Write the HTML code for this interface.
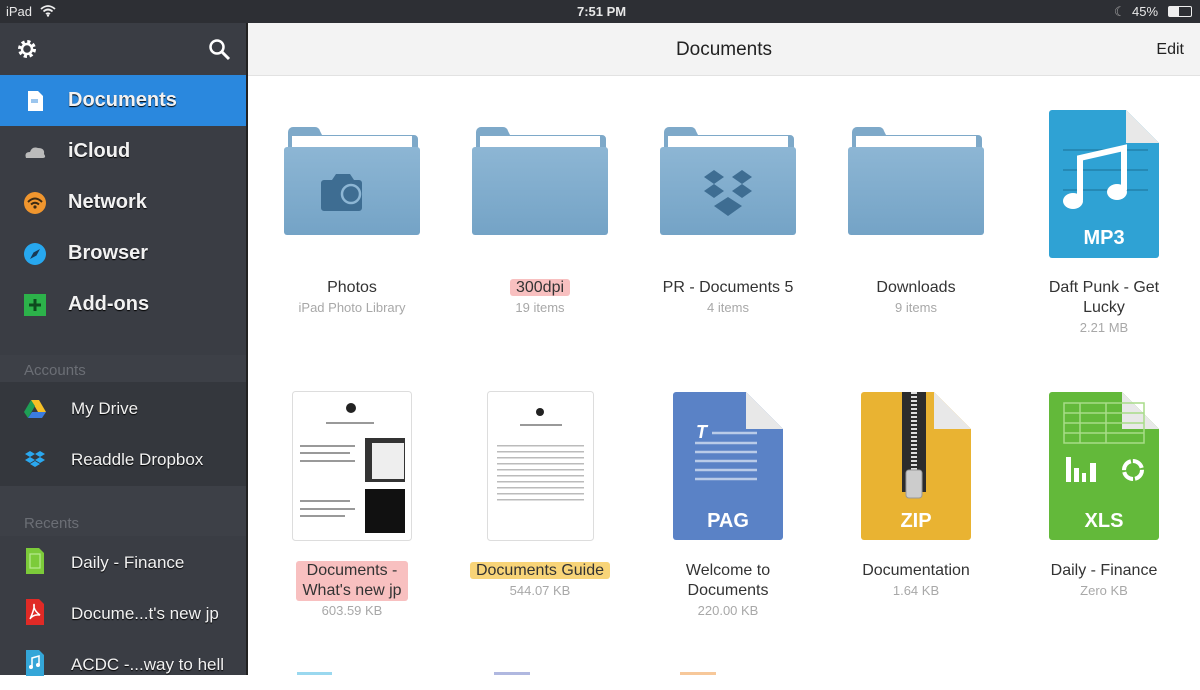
<!DOCTYPE html>
<html><head><meta charset="utf-8"><style>
*{margin:0;padding:0;box-sizing:border-box}
body{width:1200px;height:675px;overflow:hidden;background:#fff;font-family:"Liberation Sans","Noto Sans CJK JP",sans-serif;position:relative}
.abs{position:absolute}
#status{left:0;top:0;width:1200px;height:23px;background:#2d2f34;color:#e8e8e8;font-size:13px}
#side{left:0;top:23px;width:246px;height:652px;background:#3a3d44}
.row{position:absolute;left:0;width:246px;height:51px;color:#f2f2f2;font-size:20px;font-weight:bold;text-shadow:0 1px 1px #000}
.row span{position:absolute;left:68px;top:14px}
.row.sm{font-size:17px;font-weight:normal}
.row.sm span{left:71px;top:16px}
.ic{position:absolute;left:23px;top:14px;width:24px;height:24px}
.sec{position:absolute;left:24px;color:#6b6e75;font-size:15px}
#hdr{left:248px;top:23px;width:952px;height:53px;background:#f3f3f3;border-bottom:1px solid #e2e2e2}
.cell{position:absolute;width:188px;text-align:center}
.name{font-size:16px;color:#333;line-height:20px}
.sub{font-size:13px;color:#a8a8a8;line-height:20px}
.hl{padding:0 6px;border-radius:3px}
</style></head><body>
<div id="status" class="abs">
 <span class="abs" style="left:6px;top:4px">iPad</span>
 <svg class="abs" style="left:40px;top:5px" width="16" height="12" viewBox="0 0 16 12"><path d="M1 4 Q8 -2 15 4 M3.5 6.5 Q8 2.5 12.5 6.5 M6 9 Q8 7.5 10 9" stroke="#eee" stroke-width="1.8" fill="none"/><circle cx="8" cy="10.5" r="1.2" fill="#eee"/></svg>
 <span class="abs" style="left:577px;top:4px;font-weight:bold">7:51 PM</span>
 <span class="abs" style="left:1114px;top:4px;color:#aaa">☾</span>
 <span class="abs" style="left:1132px;top:4px">45%</span>
 <div class="abs" style="left:1168px;top:6px;width:24px;height:11px;border:1px solid #eee;border-radius:2px"><div style="width:10px;height:9px;background:#eee"></div></div>
</div>
<div id="side" class="abs">
 <svg class="abs" style="left:15px;top:14px" width="24" height="24" viewBox="0 0 24 24"><circle cx="12" cy="12" r="7" fill="none" stroke="#fff" stroke-width="4" stroke-dasharray="3 2.5"/><circle cx="12" cy="12" r="5" fill="none" stroke="#fff" stroke-width="2.5"/></svg>
 <svg class="abs" style="left:208px;top:15px" width="24" height="24" viewBox="0 0 24 24"><circle cx="9" cy="9" r="6.5" fill="none" stroke="#fff" stroke-width="2.5"/><path d="M14 14 L21 21" stroke="#fff" stroke-width="3"/></svg>
 <div class="row" style="top:52px;background:#2a88de;height:51px"><svg class="ic" viewBox="0 0 24 24"><path d="M5 2h10l5 5v15H5z" fill="#fff"/><rect x="8" y="10" width="7" height="4" fill="#9cc6ee"/></svg><span>Documents</span></div>
 <div class="row" style="top:103px"><svg class="ic" viewBox="0 0 24 24"><path d="M3 18 Q1 12 7 12 Q9 6 15 8 Q22 8 21 14 Q24 18 19 18Z" fill="#bbb"/></svg><span>iCloud</span></div>
 <div class="row" style="top:154px"><svg class="ic" viewBox="0 0 24 24"><circle cx="12" cy="12" r="11" fill="#f0962e"/><path d="M5 11 Q12 4 19 11 M8 13.5 Q12 10 16 13.5" stroke="#3a2a14" stroke-width="2" fill="none"/><circle cx="12" cy="16" r="1.6" fill="#3a2a14"/></svg><span>Network</span></div>
 <div class="row" style="top:205px"><svg class="ic" viewBox="0 0 24 24"><circle cx="12" cy="12" r="11" fill="#27a8ef"/><path d="M17 7 L13.5 13.5 L7 17 L10.5 10.5Z" fill="#183a55"/></svg><span>Browser</span></div>
 <div class="row" style="top:256px"><svg class="ic" viewBox="0 0 24 24"><rect x="1" y="1" width="22" height="22" fill="#2cb24a"/><path d="M12 6v12M6 12h12" stroke="#0e4a1e" stroke-width="3"/></svg><span>Add-ons</span></div>
 <div class="abs" style="left:0;top:332px;width:246px;height:27px;background:#3d4047"></div>
 <div class="sec" style="top:339px">Accounts</div>
 <div class="abs" style="left:0;top:359px;width:246px;height:104px;background:#34373d"></div>
 <div class="row sm" style="top:360px"><svg class="ic" viewBox="0 0 24 24"><path d="M8 3h8l7 12h-8z" fill="#f6c026"/><path d="M8 3L1 15l4 6 7-12z" fill="#1e9e55"/><path d="M5 21h14l4-6H9z" fill="#3b7ce0"/></svg><span>My Drive</span></div>
 <div class="row sm" style="top:411px"><svg class="ic" viewBox="0 0 24 24"><path d="M7 3l5 3-5 3-5-3zM17 3l5 3-5 3-5-3zM7 9l5 3-5 3-5-3zM17 9l5 3-5 3-5-3zM7 16l5-3 5 3-5 3z" fill="#2aa8f0"/></svg><span>Readdle Dropbox</span></div>
 <div class="abs" style="left:0;top:463px;width:246px;height:50px;background:#3d4047"></div>
 <div class="sec" style="top:492px">Recents</div>
 <div class="row sm" style="top:514px"><svg class="ic" style="top:10px;height:28px" viewBox="0 0 24 28"><path d="M3 1h13l5 5v21H3z" fill="#7ccb3a"/><rect x="7" y="7" width="10" height="14" fill="none" stroke="#b8ea90" stroke-width="1.2"/></svg><span>Daily - Finance</span></div>
 <div class="row sm" style="top:565px"><svg class="ic" style="top:10px;height:28px" viewBox="0 0 24 28"><path d="M3 1h13l5 5v21H3z" fill="#e02a26"/><path d="M7 21 Q12 10 11 6 Q10 12 17 17 Q10 16 7 21" stroke="#fff" stroke-width="1.5" fill="none"/></svg><span>Docume...t's new jp</span></div>
 <div class="row sm" style="top:616px"><svg class="ic" style="top:10px;height:28px" viewBox="0 0 24 28"><path d="M3 1h13l5 5v21H3z" fill="#34a6d8"/><path d="M9 18V9l7-2v9" stroke="#fff" stroke-width="1.5" fill="none"/><circle cx="8" cy="18" r="2" fill="#fff"/><circle cx="15" cy="16" r="2" fill="#fff"/></svg><span>ACDC -...way to hell</span></div>
</div>
<div class="abs" style="left:246px;top:23px;width:2px;height:652px;background:#222"></div>
<div id="hdr" class="abs">
 <div class="abs" style="left:0;width:952px;top:16px;text-align:center;font-size:19px;color:#222">Documents</div>
 <div class="abs" style="right:16px;top:18px;font-size:16px;color:#222">Edit</div>
</div>

<svg class="abs" style="left:0;top:0" width="1200" height="675" viewBox="0 0 1200 675">
 <defs>
  <linearGradient id="fg" x1="0" y1="0" x2="0" y2="1"><stop offset="0" stop-color="#8db6d4"/><stop offset="1" stop-color="#74a3c6"/></linearGradient>
  <g id="folder">
   <path d="M4 135 v-3 a5 5 0 0 1 5 -5 h22 a5 5 0 0 1 5 4 l2 4 h92 a4 4 0 0 1 4 4 v10 h-130z" fill="#7ea9c9"/>
   <rect x="8" y="136" width="120" height="12" fill="#fff"/>
   <rect x="0" y="147" width="136" height="88" rx="3" fill="url(#fg)"/>
  </g>
 </defs>
 <use href="#folder" x="284"/>
 <use href="#folder" x="472"/>
 <use href="#folder" x="660"/>
 <use href="#folder" x="848"/>
 <!-- camera -->
 <path d="M324 180 h8 l4 -6 h14 l4 6 h5 a3 3 0 0 1 3 3 v25 a3 3 0 0 1 -3 3 h-35 a3 3 0 0 1 -3 -3 v-25 a3 3 0 0 1 3 -3z" fill="#3e6d92"/>
 <circle cx="351" cy="194" r="9" fill="none" stroke="#8db6d4" stroke-width="2.5"/>
 <!-- dropbox -->
 <g fill="#3e6d92"><path d="M704 177l10-7 10 7-10 7z M732 177l10-7 10 7-10 7z M704 191l10-7 10 7-10 7z M732 191l10-7 10 7-10 7z M714 206l14-9 14 9-14 10z"/></g>
 <!-- MP3 -->
 <path d="M1049 113 a3 3 0 0 1 3 -3 h74 l33 33 v112 a3 3 0 0 1 -3 3 h-104 a3 3 0 0 1 -3 -3z" fill="#2fa2d4"/>
 <path d="M1126 110 l33 33 h-33z" fill="#e8e8e8"/>
 <g stroke="#2589b5" stroke-width="2"><path d="M1063 150h85M1063 170h85M1063 190h85"/></g>
 <path d="M1080 200 V158 l44 -10 v42" stroke="#fff" stroke-width="6" fill="none"/>
 <ellipse cx="1073" cy="201" rx="10" ry="8" fill="#fff"/><ellipse cx="1117" cy="192" rx="10" ry="8" fill="#fff"/>
 <text x="1104" y="244" font-family="Liberation Sans" font-weight="bold" font-size="20" fill="#fff" text-anchor="middle">MP3</text>
 <!-- docs thumbnails -->
 <rect x="292.5" y="391.5" width="119" height="149" rx="3" fill="#fff" stroke="#ddd"/>
 <circle cx="351" cy="408" r="5" fill="#222"/>
 <g fill="#999"><rect x="326" y="422" width="48" height="2"/><rect x="300" y="445" width="55" height="2"/><rect x="300" y="452" width="50" height="2"/><rect x="300" y="460" width="55" height="2"/><rect x="300" y="500" width="50" height="2"/><rect x="300" y="508" width="55" height="2"/><rect x="300" y="515" width="45" height="2"/></g>
 <rect x="365" y="438" width="40" height="44" fill="#333"/><rect x="372" y="443" width="32" height="36" fill="#eee"/>
 <rect x="365" y="489" width="40" height="44" fill="#111"/>
 <rect x="487.5" y="391.5" width="106" height="149" rx="3" fill="#fff" stroke="#ddd"/>
 <circle cx="540" cy="412" r="4" fill="#222"/><rect x="520" y="424" width="42" height="2" fill="#999"/>
 <g fill="#bbb"><rect x="497" y="445" width="87" height="1.5"/><rect x="497" y="451" width="87" height="1.5"/><rect x="497" y="457" width="87" height="1.5"/><rect x="497" y="463" width="87" height="1.5"/><rect x="497" y="469" width="87" height="1.5"/><rect x="497" y="475" width="87" height="1.5"/><rect x="497" y="481" width="87" height="1.5"/><rect x="497" y="487" width="87" height="1.5"/><rect x="497" y="493" width="87" height="1.5"/><rect x="497" y="499" width="87" height="1.5"/></g>
 <!-- PAG -->
 <path d="M673 395 a3 3 0 0 1 3 -3 h70 l37 37 v108 a3 3 0 0 1 -3 3 h-104 a3 3 0 0 1 -3 -3z" fill="#5a82c6"/>
 <path d="M746 392 l37 37 h-37z" fill="#e8e8e8"/>
 <text x="696" y="438" font-family="Liberation Sans" font-weight="bold" font-style="italic" font-size="18" fill="#fff">T</text>
 <g stroke="#b9cbe8" stroke-width="2.5"><path d="M712 433h45M695 443h62M695 452h62M695 461h62M695 470h62M695 479h62"/></g>
 <text x="728" y="527" font-family="Liberation Sans" font-weight="bold" font-size="20" fill="#fff" text-anchor="middle">PAG</text>
 <!-- ZIP -->
 <path d="M861 395 a3 3 0 0 1 3 -3 h70 l37 37 v108 a3 3 0 0 1 -3 3 h-104 a3 3 0 0 1 -3 -3z" fill="#e9b332"/>
 <path d="M934 392 l37 37 h-37z" fill="#e8e8e8"/>
 <rect x="902" y="392" width="24" height="100" fill="#2c2c2c"/>
 <path d="M914 392 v100" stroke="#ddd" stroke-width="6" stroke-dasharray="2 2"/>
 <rect x="906" y="470" width="16" height="28" rx="3" fill="#ccc" stroke="#999"/>
 <text x="916" y="527" font-family="Liberation Sans" font-weight="bold" font-size="20" fill="#fff" text-anchor="middle">ZIP</text>
 <!-- XLS -->
 <path d="M1049 395 a3 3 0 0 1 3 -3 h70 l37 37 v108 a3 3 0 0 1 -3 3 h-104 a3 3 0 0 1 -3 -3z" fill="#63b93a"/>
 <path d="M1122 392 l37 37 h-37z" fill="#e8e8e8"/>
 <g stroke="#a8dc88" stroke-width="1.5" fill="none"><rect x="1064" y="403" width="80" height="40"/><path d="M1064 413h80M1064 423h80M1064 433h80M1080 403v40M1106 403v40"/></g>
 <g fill="#fff"><rect x="1066" y="457" width="5" height="25"/><rect x="1074" y="468" width="5" height="14"/><rect x="1082" y="473" width="4" height="9"/><rect x="1090" y="463" width="6" height="19"/></g>
 <circle cx="1133" cy="470" r="9" fill="none" stroke="#fff" stroke-width="4" stroke-dasharray="12 2"/>
 <text x="1104" y="527" font-family="Liberation Sans" font-weight="bold" font-size="20" fill="#fff" text-anchor="middle">XLS</text>
 <!-- third row peeks -->
 <rect x="297" y="672" width="35" height="3" fill="#9ad8ef"/>
 <rect x="494" y="672" width="36" height="3" fill="#b0b8e0"/>
 <rect x="680" y="672" width="36" height="3" fill="#f7c89a"/>
</svg>

<div class="cell" style="left:258px;top:278px"><div class="name">Photos</div><div class="sub">iPad Photo Library</div></div>
<div class="cell" style="left:446px;top:278px"><div class="name"><span class="hl" style="background:#f8c0c0">300dpi</span></div><div class="sub">19 items</div></div>
<div class="cell" style="left:634px;top:278px"><div class="name">PR - Documents 5</div><div class="sub">4 items</div></div>
<div class="cell" style="left:822px;top:278px"><div class="name">Downloads</div><div class="sub">9 items</div></div>
<div class="cell" style="left:1010px;top:278px"><div class="name">Daft Punk - Get<br>Lucky</div><div class="sub">2.21 MB</div></div>

<div class="cell" style="left:258px;top:561px"><div class="name"><span class="hl" style="background:#f8c0c0;display:inline-block">Documents -<br>What's new jp</span></div><div class="sub">603.59 KB</div></div>
<div class="cell" style="left:446px;top:561px"><div class="name"><span class="hl" style="background:#f8d478">Documents Guide</span></div><div class="sub">544.07 KB</div></div>
<div class="cell" style="left:634px;top:561px"><div class="name">Welcome to<br>Documents</div><div class="sub">220.00 KB</div></div>
<div class="cell" style="left:822px;top:561px"><div class="name">Documentation</div><div class="sub">1.64 KB</div></div>
<div class="cell" style="left:1010px;top:561px"><div class="name">Daily - Finance</div><div class="sub">Zero KB</div></div>
</body></html>
